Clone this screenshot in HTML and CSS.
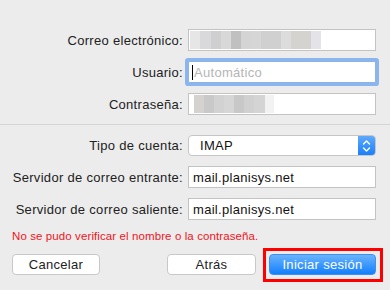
FILE: index.html
```html
<!DOCTYPE html>
<html lang="es">
<head>
    <meta charset="UTF-8">
    <meta name="viewport" content="width=device-width, initial-scale=1.0">
    <title>Añadir cuenta</title>
    <link rel="stylesheet" href="styles.css">
</head>
<body>
    <div class="sheet">
        <div class="form">
            <label class="label" for="email">Correo electrónico:</label>
            <div class="field" id="email"><span class="blur blur-email"></span></div>

            <label class="label" for="user">Usuario:</label>
            <div class="field focused" id="user"><span class="caret"></span><span class="placeholder">Automático</span></div>

            <label class="label" for="pass">Contraseña:</label>
            <div class="field" id="pass"><span class="blur blur-pass"></span></div>
        </div>

        <div class="divider"></div>

        <div class="form">
            <label class="label" for="type">Tipo de cuenta:</label>
            <div class="select" id="type">
                <span class="select-value">IMAP</span>
                <span class="stepper">
                    <svg width="9" height="14" viewBox="0 0 9 14">
                        <path d="M1.5 5 L4.5 2 L7.5 5" fill="none" stroke="#fff" stroke-width="1.4" stroke-linecap="round" stroke-linejoin="round"/>
                        <path d="M1.5 9 L4.5 12 L7.5 9" fill="none" stroke="#fff" stroke-width="1.4" stroke-linecap="round" stroke-linejoin="round"/>
                    </svg>
                </span>
            </div>

            <label class="label" for="incoming">Servidor de correo entrante:</label>
            <div class="field" id="incoming">mail.planisys.net</div>

            <label class="label" for="outgoing">Servidor de correo saliente:</label>
            <div class="field" id="outgoing">mail.planisys.net</div>
        </div>

        <p class="error">No se pudo verificar el nombre o la contraseña.</p>

        <div class="actions">
            <button class="btn btn-cancel">Cancelar</button>
            <button class="btn">Atrás</button>
            <button class="btn btn-primary highlighted">Iniciar sesión</button>
        </div>
    </div>
</body>
</html>
```

FILE: styles.css
```css
body {
    margin: 0;
    background: #ececec;
    font-family: "Liberation Sans", Arial, sans-serif;
    font-size: 13px;
    letter-spacing: 0.3px;
    color: #222;
}
.sheet {
    width: 390px;
    height: 290px;
    padding-top: 29px;
    box-sizing: border-box;
}
.form {
    display: grid;
    grid-template-columns: 1fr 188px;
    column-gap: 5px;
    row-gap: 10px;
    padding-right: 14px;
    align-items: center;
}
.label {
    text-align: right;
    white-space: nowrap;
}
.field {
    height: 22px;
    box-sizing: border-box;
    background: #fff;
    border: 1px solid #c3c3c3;
    padding: 0 4px;
    display: flex;
    align-items: center;
    color: #111;
}
.field.focused {
    border-color: #8eb4e6;
    box-shadow: 0 0 0 3px #8ab5ee;
    border-radius: 1px;
    padding-left: 3px;
}
.caret {
    width: 1px;
    height: 15px;
    background: #000;
    margin-right: 1px;
}
.placeholder {
    color: #b5b5b5;
}
.blur {
    height: 18px;
    display: block;
    margin-left: -3px;
}
.blur-email {
    width: 131px;
    background: linear-gradient(to right,
        #e6e6e6 0 10px, #d9d9dc 10px 21px, #cfcfcf 21px 31px, #d8d8d8 31px 41px,
        #c0c0c0 41px 51px, #d4d4d4 51px 61px, #d6d6d6 61px 71px, #d0d0d0 71px 91px,
        #dcdcdc 91px 101px, #d5d3d0 101px 121px, #e4e4e8 121px 131px);
}
.blur-pass {
    width: 90px;
    margin-left: 1px;
    background: linear-gradient(to right,
        #d6d2d0 0 10px, #c9c9c9 10px 20px, #d2d2d2 20px 30px, #d6d6d6 30px 40px,
        #c8c8c8 40px 50px, #d0d0d0 50px 60px, #d4d4d4 60px 71px, #f2f2f2 71px 80px, #fff 80px);
}
.divider {
    height: 1px;
    background: #d4d4d4;
    margin: 9px 0 10px;
}
.select {
    height: 21px;
    box-sizing: border-box;
    background: #fff;
    border: 1px solid #c6c6c6;
    border-radius: 4px;
    display: flex;
    align-items: center;
    overflow: hidden;
}
.select-value {
    flex: 1;
    padding-left: 11px;
    color: #111;
}
.stepper {
    width: 17px;
    height: 100%;
    background: linear-gradient(#5ea9fb, #1a7ffb);
    display: flex;
    align-items: center;
    justify-content: center;
}
.error {
    margin: 8px 0 0 12px;
    height: 16px;
    line-height: 16px;
    font-size: 11.5px;
    letter-spacing: 0.1px;
    color: #f0141e;
}
.actions {
    display: flex;
    gap: 13px;
    padding: 0 14px 0 12px;
    margin-top: 10px;
}
.btn {
    height: 21px;
    width: 89px;
    box-sizing: border-box;
    background: #fff;
    border: 1px solid #c8c8c8;
    border-radius: 4px;
    font-family: inherit;
    font-size: 13px;
    letter-spacing: 0.3px;
    color: #222;
    padding: 0;
}
.btn-cancel {
    width: 88px;
    margin-right: auto;
}
.btn-primary {
    width: 107px;
    background: linear-gradient(#6ab3fb, #127ffd);
    border-color: #3d8ff5;
    color: #fff;
}
.highlighted {
    position: relative;
}
.highlighted::after {
    content: "";
    position: absolute;
    top: -7px;
    right: -8px;
    bottom: -8px;
    left: -7px;
    border: 3px solid #f00;
}
```
